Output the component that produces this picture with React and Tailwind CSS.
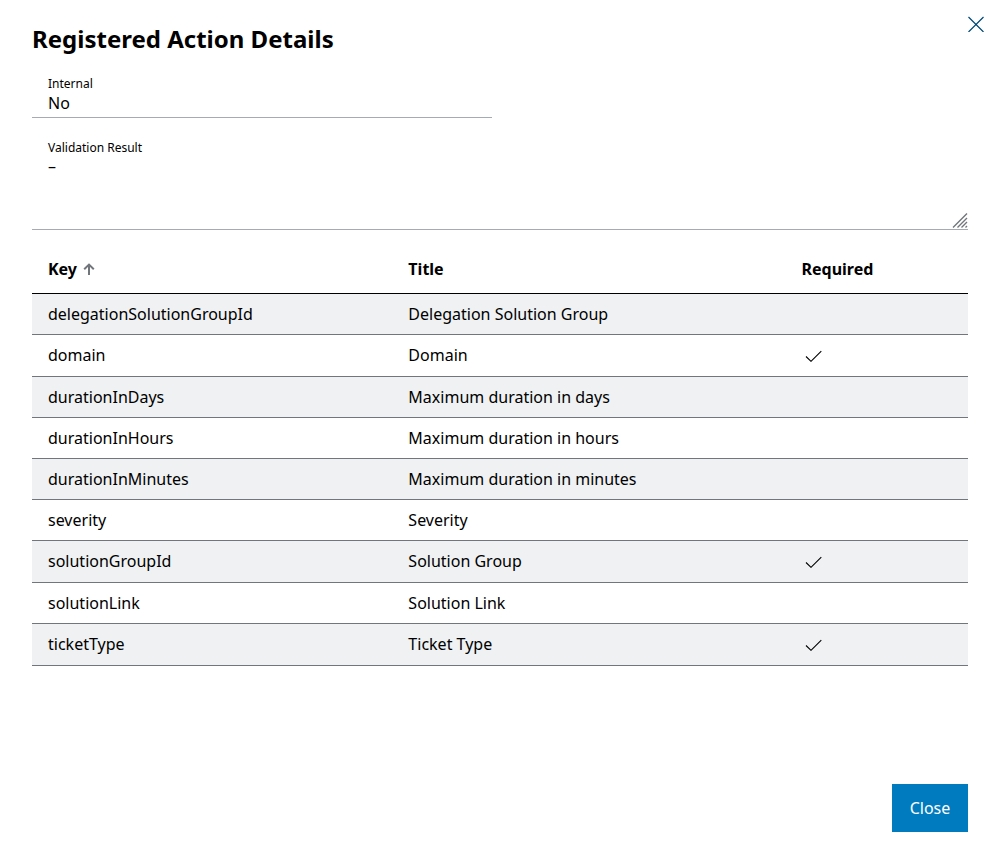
import { useState } from "react"

const parameters = [
  { key: "delegationSolutionGroupId", title: "Delegation Solution Group", required: false },
  { key: "domain", title: "Domain", required: true },
  { key: "durationInDays", title: "Maximum duration in days", required: false },
  { key: "durationInHours", title: "Maximum duration in hours", required: false },
  { key: "durationInMinutes", title: "Maximum duration in minutes", required: false },
  { key: "severity", title: "Severity", required: false },
  { key: "solutionGroupId", title: "Solution Group", required: true },
  { key: "solutionLink", title: "Solution Link", required: false },
  { key: "ticketType", title: "Ticket Type", required: true },
]

function CloseIcon() {
  return (
    <svg width="16" height="16" viewBox="0 0 16 16" fill="none" stroke="currentColor" strokeWidth="1.2">
      <path d="M0.5 1 15.5 16M15.5 1 0.5 16" />
    </svg>
  )
}

function CheckIcon() {
  return (
    <svg
      role="img"
      aria-label="Required"
      className="ml-1"
      width="17"
      height="13"
      viewBox="0 0 17 13"
      fill="none"
      stroke="currentColor"
      strokeWidth="1.1"
    >
      <path d="M1 7.5 6 12.3 16.3 2.2" />
    </svg>
  )
}

function SortArrow() {
  return (
    <svg width="12" height="12" viewBox="0 0 12 12" fill="none" stroke="currentColor" strokeWidth="2">
      <path d="M6 12V1.5M1.2 6.3 6 1.6 10.8 6.3" />
    </svg>
  )
}

function ParameterTable({ rows }) {
  const [ascending, setAscending] = useState(true)
  const sorted = ascending ? rows : [...rows].reverse()

  return (
    <table className="w-full table-fixed border-collapse text-left">
      <thead>
        <tr className="h-[47px] border-b border-black">
          <th className="w-[38.5%] px-4 font-bold" aria-sort={ascending ? "ascending" : "descending"}>
            <button
              type="button"
              className="flex items-center gap-1.5 font-bold"
              onClick={() => setAscending(!ascending)}
            >
              Key
              <span className={ascending ? "text-[#71767c]" : "rotate-180 text-[#71767c]"}>
                <SortArrow />
              </span>
            </button>
          </th>
          <th className="w-[42%] px-4 font-bold">Title</th>
          <th className="px-4 font-bold">Required</th>
        </tr>
      </thead>
      <tbody>
        {sorted.map((row) => (
          <tr
            key={row.key}
            className={
              row.required
                ? "h-[42px] border-b border-[#71767c] odd:bg-[#eff1f2]"
                : "h-[41px] border-b border-[#71767c] odd:bg-[#eff1f2]"
            }
          >
            <td className="px-4">{row.key}</td>
            <td className="px-4">{row.title}</td>
            <td className="px-4">{row.required && <CheckIcon />}</td>
          </tr>
        ))}
      </tbody>
    </table>
  )
}

export default function App() {
  return (
    <div
      role="dialog"
      aria-labelledby="dialog-title"
      className="relative flex min-h-screen flex-col bg-white p-8 pt-6 font-['Noto_Sans',sans-serif] text-base text-black"
    >
      <button type="button" aria-label="Close dialog" className="absolute top-4 right-4 text-[#004975]">
        <CloseIcon />
      </button>

      <h1 id="dialog-title" className="text-2xl leading-[30px] font-bold">
        Registered Action Details
      </h1>

      <div className="mt-[18px] grid grid-cols-2 gap-4">
        <div className="flex flex-col border-b border-[#a4abb3] px-4 pt-1">
          <label htmlFor="internal" className="text-xs leading-4">
            Internal
          </label>
          <input id="internal" readOnly value="No" className="h-[25px] w-full pb-1 outline-none" />
        </div>

        <div className="col-span-2 flex flex-col border-b border-[#a4abb3] pt-1.5">
          <label htmlFor="validation-result" className="px-4 text-xs leading-4">
            Validation Result
          </label>
          <div className="relative h-[73px]">
            <textarea
              id="validation-result"
              readOnly
              value="–"
              className="block h-full w-full resize-none px-4 leading-5 outline-none"
            />
            <svg
              className="pointer-events-none absolute right-0 bottom-0 text-[#71767c]"
              width="16"
              height="16"
              viewBox="0 0 16 16"
              fill="none"
              stroke="currentColor"
              strokeWidth="1.4"
            >
              <path d="M1 14.5 15 0.5M5.5 14.5 15 5M9.5 14.5 15 9M13.5 14.5 15 13" />
            </svg>
          </div>
        </div>
      </div>

      <div className="mt-4 grow">
        <ParameterTable rows={parameters} />
      </div>

      <div className="mt-8 flex justify-end">
        <button type="button" className="h-12 min-w-[76px] bg-[#007bc0] px-4 text-white">
          Close
        </button>
      </div>
    </div>
  )
}
